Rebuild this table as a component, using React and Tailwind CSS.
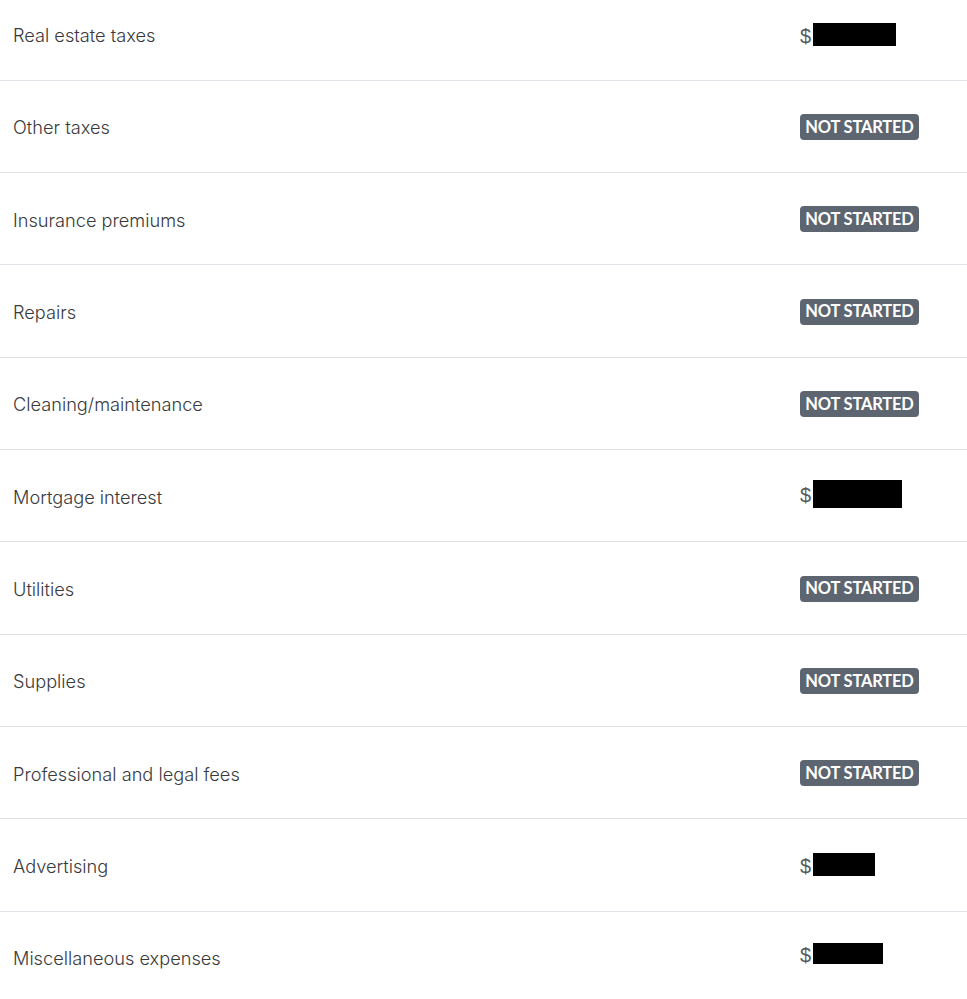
const rows = [
  { label: "Real estate taxes", amount: { w: 83, h: 23, dy: 0 } },
  { label: "Other taxes" },
  { label: "Insurance premiums" },
  { label: "Repairs" },
  { label: "Cleaning/maintenance" },
  { label: "Mortgage interest", amount: { w: 89, h: 28, dy: -2 } },
  { label: "Utilities" },
  { label: "Supplies" },
  { label: "Professional and legal fees" },
  { label: "Advertising", amount: { w: 62, h: 23, dy: -1 } },
  { label: "Miscellaneous expenses", amount: { w: 70, h: 21, dy: -4 } },
];

function Amount({ w, h, dy }) {
  return (
    <div className="flex items-center gap-[2px]" style={{ marginTop: dy * 2 }}>
      <span className="text-[20px] pt-[2px] text-[#55595e] font-['Liberation_Sans',sans-serif] leading-none">
        $
      </span>
      <span className="bg-black" style={{ width: w, height: h }} />
    </div>
  );
}

function Badge() {
  return (
    <span className="inline-flex items-center justify-center h-[26px] w-[119px] rounded-[4px] bg-[#5d6670] text-white text-[16.5px] font-bold tracking-[-0.2px] font-['Lato',sans-serif] leading-none">
      NOT STARTED
    </span>
  );
}

export default function App() {
  return (
    <div className="bg-white w-[967px] h-[999px] overflow-hidden font-['Inter',sans-serif]">
      <div className="-mt-[11.5px]">
        {rows.map((r) => (
          <div
            key={r.label}
            className="flex items-center h-[92.33px] border-b border-[#dfe3e8] pl-[13px]"
          >
            <div className="flex-1 pt-[3px] text-[18.2px] font-light text-[#393a3d]">
              {r.label}
            </div>
            <div className="w-[167px] shrink-0 flex items-center pt-[1px]">
              {r.amount ? <Amount {...r.amount} /> : <Badge />}
            </div>
          </div>
        ))}
      </div>
    </div>
  );
}
